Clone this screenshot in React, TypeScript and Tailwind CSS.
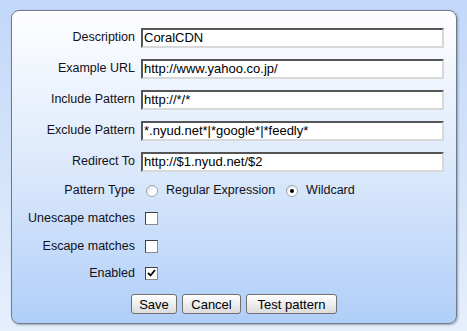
import React, { useState } from "react";

type FieldRow = { label: string; value: string };

const fields: FieldRow[] = [
  { label: "Description", value: "CoralCDN" },
  { label: "Example URL", value: "http://www.yahoo.co.jp/" },
  { label: "Include Pattern", value: "http://*/*" },
  { label: "Exclude Pattern", value: "*.nyud.net*|*google*|*feedly*" },
  { label: "Redirect To", value: "http://$1.nyud.net/$2" },
];

function Radio({ checked, label, onClick }: { checked: boolean; label: string; onClick: () => void }) {
  return (
    <button type="button" onClick={onClick} className="flex items-center gap-[8px] text-[12.5px] text-[#111118]">
      <span className="flex h-[12px] w-[12px] items-center justify-center rounded-full border border-[#9ea4ac] bg-gradient-to-br from-[#d6dbe2] via-white to-white">
        {checked && <span className="h-[4px] w-[4px] rounded-full bg-black" />}
      </span>
      {label}
    </button>
  );
}

function Check({ checked, onClick }: { checked: boolean; onClick: () => void }) {
  return (
    <button
      type="button"
      onClick={onClick}
      className="flex h-[13px] w-[13px] items-center justify-center border border-t-[#404040] border-l-[#404040] border-r-[#8a8a8a] border-b-[#8a8a8a] bg-white"
    >
      {checked && (
        <svg width="9" height="9" viewBox="0 0 9 9">
          <path d="M1 4 L3.5 6.5 L8 1" stroke="#000" strokeWidth="1.8" fill="none" />
        </svg>
      )}
    </button>
  );
}

export default function App() {
  const [values, setValues] = useState(fields.map((f) => f.value));
  const [wildcard, setWildcard] = useState(true);
  const [unescape, setUnescape] = useState(false);
  const [escape, setEscape] = useState(false);
  const [enabled, setEnabled] = useState(true);

  const label = "w-[129px] shrink-0 pr-[6px] text-right text-[12.5px] text-[#111118]";

  return (
    <div className="h-[331px] w-[467px] bg-gradient-to-b from-[#c2d8f8] to-[#e6effc] pl-[11px] pt-[10px] font-['Liberation_Sans',Arial,sans-serif]">
      <div className="flex h-[314px] w-[446px] flex-col rounded-[8px] border border-[#6e7c8c] bg-gradient-to-b from-[#fefeff] via-[#dce9fb] to-[#b0cef8] pt-[11px] shadow-[1px_1px_2px_rgba(60,80,110,0.45)]">
        {fields.map((f, i) => (
          <div key={f.label} className="flex h-[31px] items-center">
            <span className={label}>{f.label}</span>
            <input
              type="text"
              value={values[i]}
              onChange={(e) => setValues(values.map((v, j) => (j === i ? e.target.value : v)))}
              className="h-[20px] w-[303px] border-2 border-t-[#555] border-l-[#555] border-r-[#d8d8d8] border-b-[#d8d8d8] bg-white px-[1px] text-[13px] text-black outline-0"
            />
          </div>
        ))}
        <div className="flex h-[27px] items-center">
          <span className={label}>Pattern Type</span>
          <div className="flex items-center gap-[11px] pl-[5px]">
            <Radio checked={!wildcard} label="Regular Expression" onClick={() => setWildcard(false)} />
            <Radio checked={wildcard} label="Wildcard" onClick={() => setWildcard(true)} />
          </div>
        </div>
        <div className="flex h-[28px] items-center">
          <span className={label}>Unescape matches</span>
          <span className="pl-[4px]">
            <Check checked={unescape} onClick={() => setUnescape(!unescape)} />
          </span>
        </div>
        <div className="flex h-[28px] items-center">
          <span className={label}>Escape matches</span>
          <span className="pl-[4px]">
            <Check checked={escape} onClick={() => setEscape(!escape)} />
          </span>
        </div>
        <div className="flex h-[27px] items-center">
          <span className={label}>Enabled</span>
          <span className="pl-[4px]">
            <Check checked={enabled} onClick={() => setEnabled(!enabled)} />
          </span>
        </div>
        <div className="mt-[7px] flex justify-center gap-[5px]">
          {[
            ["Save", "w-[46px]"],
            ["Cancel", "w-[59px]"],
            ["Test pattern", "w-[91px]"],
          ].map(([t, w]) => (
            <button
              key={t}
              type="button"
              className={`h-[20px] ${w} rounded-[3px] border border-[#707070] bg-gradient-to-b from-white to-[#dcdcdc] text-[13px] leading-none text-black`}
            >
              {t}
            </button>
          ))}
        </div>
      </div>
    </div>
  );
}
